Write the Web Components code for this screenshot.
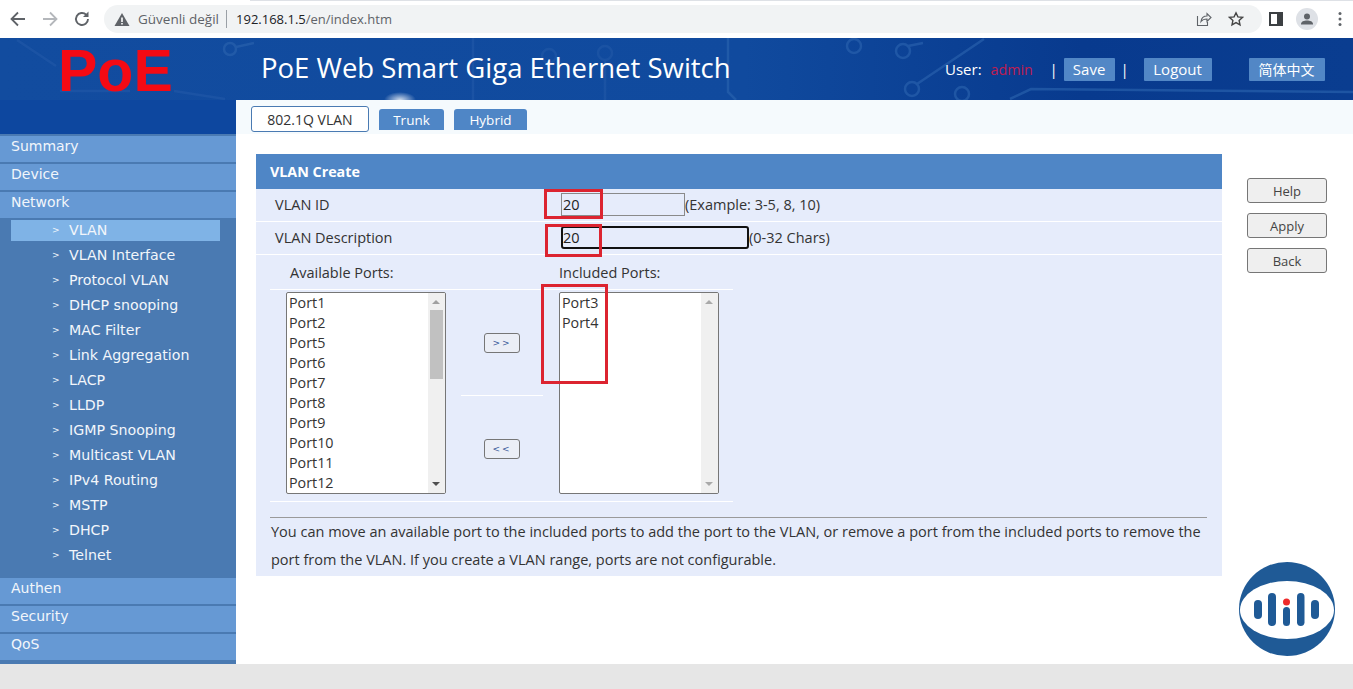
<!DOCTYPE html>
<html>
<head>
<meta charset="utf-8">
<title>VLAN</title>
<style>
    html, body { margin: 0; height: 100%; overflow: hidden; background: #fff; }
    body { display: flex; flex-direction: column; height: 689px; font-family: "Open Sans", "Liberation Sans", sans-serif; color: #222; }
    main-area { flex: 1; }
</style>
</head>
<body>
<browser-bar></browser-bar>
<switch-header></switch-header>
<main-area>
    <side-menu>
        <menu-head>Summary</menu-head>
        <menu-head>Device</menu-head>
        <menu-head>Network</menu-head>
        <menu-list>
            <menu-sub active>VLAN</menu-sub>
            <menu-sub>VLAN Interface</menu-sub>
            <menu-sub>Protocol VLAN</menu-sub>
            <menu-sub>DHCP snooping</menu-sub>
            <menu-sub>MAC Filter</menu-sub>
            <menu-sub>Link Aggregation</menu-sub>
            <menu-sub>LACP</menu-sub>
            <menu-sub>LLDP</menu-sub>
            <menu-sub>IGMP Snooping</menu-sub>
            <menu-sub>Multicast VLAN</menu-sub>
            <menu-sub>IPv4 Routing</menu-sub>
            <menu-sub>MSTP</menu-sub>
            <menu-sub>DHCP</menu-sub>
            <menu-sub>Telnet</menu-sub>
        </menu-list>
        <menu-head>Authen</menu-head>
        <menu-head>Security</menu-head>
        <menu-head>QoS</menu-head>
    </side-menu>
    <tab-strip>
        <tab-btn active style="width:118px">802.1Q VLAN</tab-btn>
        <tab-btn style="width:65px">Trunk</tab-btn>
        <tab-btn style="width:73px">Hybrid</tab-btn>
    </tab-strip>
    <vlan-panel></vlan-panel>
    <action-column></action-column>
</main-area>
<div style="height:25px;background:#e6e6e6;flex:none"></div>

<script>
class BrowserBar extends HTMLElement{
    constructor(){
        super();
        this.shadow = this.attachShadow({mode: "open"});
    }

    connectedCallback(){
        this.shadow.innerHTML = `
            <style>
                :host { display: block; flex: none; height: 38px; background: #fff; position: relative; font-family: "Open Sans", sans-serif; }
                #top { position: absolute; left: 250px; right: 0; top: 0; height: 1px; background: #dee1e6; }
                #bar { display: flex; align-items: center; height: 38px; padding: 0 0 0 8px; box-sizing: border-box; }
                svg { display: block; flex: none; }
                .nav { width: 20px; height: 20px; margin-right: 12px; }
                #pill { display: flex; align-items: center; width: 1158px; height: 28px; margin-left: 12px; border-radius: 14px; background: #f1f3f4; }
                #warn { margin-left: 10px; }
                #state { font-size: 13.5px; color: #5f6368; margin-left: 8px; white-space: nowrap; }
                #sep { width: 1px; height: 18px; background: #9aa0a6; margin: 0 9px 0 7px; }
                #host { font-size: 13px; color: #202124; }
                #path { font-size: 13px; color: #5f6368; }
                #share { margin-left: auto; }
                #star { margin: 0 18px 0 16px; }
                #panel { margin-left: 7px; }
                #user { margin-left: 13px; }
                #more { margin-left: 20px; }
            </style>
            <div id="top"></div>
            <div id="bar">
                <svg class="nav" viewBox="0 0 20 20" fill="none" stroke="#5f6368" stroke-width="1.8"><path d="M17 10H4M10 3.5L3.5 10l6.500 6.500"/></svg>
                <svg class="nav" viewBox="0 0 20 20" fill="none" stroke="#b4b7bb" stroke-width="1.8"><path d="M3 10h13M10 3.500L16.500 10 10 16.500"/></svg>
                <svg class="nav" style="margin-right:0" viewBox="0 0 20 20" fill="none" stroke="#5f6368" stroke-width="1.9"><path d="M16 10a6 6 0 1 1-1.800-4.300"/><path d="M16.500 2.500v5.500H11z" fill="#5f6368" stroke="none"/></svg>
                <div id="pill">
                    <svg id="warn" width="16" height="15" viewBox="0 0 16 15"><path d="M8 1L15.500 14H.5z" fill="#5f6368"/><path d="M7.200 5.500h1.600v4.500H7.200zM7.200 11h1.600v1.500H7.200z" fill="#fff"/></svg>
                    <span id="state">Güvenli değil</span>
                    <span id="sep"></span>
                    <span id="host">192.168.1.5</span><span id="path">/en/index.htm</span>
                    <svg id="share" width="16" height="16" viewBox="0 0 16 16" fill="none" stroke="#5f6368" stroke-width="1.100"><path d="M1.500 5v9.500h10V11"/><path d="M5 10.500C5.500 6.500 8 5 11 5V2.500L15 6.500 11 10.500V8C8.500 8 6.500 8.500 5 10.500z"/></svg>
                    <svg id="star" width="16" height="16" viewBox="0 0 16 16" fill="none" stroke="#444" stroke-width="1.400"><path d="M8 1.800l1.900 4.100 4.500.5-3.300 3 .9 4.400L8 11.600l-4 2.200.9-4.400-3.300-3 4.500-.5z"/></svg>
                </div>
                <svg id="panel" width="14" height="14" viewBox="0 0 14 14"><path d="M0 0h14v14H0z" fill="#3c4043"/><path d="M2 2h6v10H2z" fill="#fff"/></svg>
                <svg id="user" width="22" height="22" viewBox="0 0 22 22"><circle cx="11" cy="11" r="11" fill="#dee1e6"/><circle cx="11" cy="8.500" r="3" fill="#5f6368"/><path d="M5 16c0-2.500 3-3.500 6-3.500s6 1 6 3.500v.500H5z" fill="#5f6368"/></svg>
                <svg id="more" width="4" height="16" viewBox="0 0 4 16" fill="#5f6368"><circle cx="2" cy="2.500" r="1.500"/><circle cx="2" cy="8" r="1.500"/><circle cx="2" cy="13.500" r="1.500"/></svg>
            </div>
        `;
    }
}
customElements.define("browser-bar", BrowserBar);

class SwitchHeader extends HTMLElement{
    constructor(){
        super();
        this.shadow = this.attachShadow({mode: "open"});
    }

    connectedCallback(){
        this.shadow.innerHTML = `
            <style>
                :host { display: block; flex: none; height: 62px; position: relative; background: linear-gradient(90deg, #124c9f 0%, #104a9e 55%, #083a8e 80%, #0a3d90 100%); font-family: "Open Sans", "Noto Sans CJK SC", sans-serif; color: #fff; }
                #traces { position: absolute; left: 0; top: 0; }
                #row { position: relative; display: flex; align-items: center; height: 62px; }
                #logo { width: 261px; box-sizing: border-box; padding-left: 58px; font: bold 59px/58px "Liberation Sans", sans-serif; color: #f40a14; margin-top: 3px; }
                #title { font-size: 27.500px; margin-top: -3px; width: 684px; white-space: nowrap; }
                #tools { display: flex; align-items: center; font-size: 15px; }
                #who { color: #c01c50; margin-left: 9px; width: 42px; font-size: 14.300px; }
                .bar { width: 10px; text-align: center; }
                .act { display: flex; align-items: center; justify-content: center; height: 23px; background: #5287c6; border-radius: 1px; }
            </style>
            <svg id="traces" width="1353" height="62" fill="none" stroke-width="2.500">
                <defs>
                    <radialGradient id="glow"><stop offset="0" stop-color="#fff" stop-opacity=".8"/><stop offset="1" stop-color="#fff" stop-opacity="0"/></radialGradient>
                </defs>
                <g stroke="#2a60ac" opacity=".4">
                    <path d="M17 2l39 26M60 53h70M174 53l51 8"/>
                    <circle cx="549" cy="18" r="7"/><circle cx="605" cy="15" r="7"/>
                    <path d="M473 0v62M605 22v40"/>
                </g>
                <g stroke="#2a62ae" opacity=".65">
                    <circle cx="230" cy="11" r="6"/><path d="M236 9l18-4"/>
                    <circle cx="854" cy="8" r="7"/>
                    <circle cx="903" cy="13" r="7"/><path d="M908 8l15-3"/>
                    <circle cx="912" cy="51" r="7"/><path d="M917 46l67-45"/>
                    <circle cx="962" cy="56" r="7"/>
                    <path d="M728 0v54l8 8M1010 61l21-10 322 3"/>
                </g>
                <ellipse cx="400" cy="62" rx="16" ry="8" fill="url(#glow)"/>
            </svg>
            <div id="row">
                <div id="logo">PoE</div>
                <div id="title">PoE Web Smart Giga Ethernet Switch</div>
                <div id="tools">
                    <span>User:</span><span id="who">admin</span>
                    <span class="bar" style="margin-left:16px">|</span>
                    <span class="act" style="width:51px;margin-left:5px">Save</span>
                    <span class="bar" style="margin-left:5px">|</span>
                    <span class="act" style="width:68px;margin-left:14px">Logout</span>
                    <span class="act" style="width:76px;margin-left:37px;font-size:14px">简体中文</span>
                </div>
            </div>
        `;
    }
}
customElements.define("switch-header", SwitchHeader);

class MainArea extends HTMLElement{
    constructor(){
        super();
        this.shadow = this.attachShadow({mode: "open"});
    }

    connectedCallback(){
        this.shadow.innerHTML = `
            <style>
                :host { display: grid; grid-template-columns: 236px 20px 966px 1fr; grid-template-rows: 34px 1fr; min-height: 0; }
                ::slotted(side-menu) { grid-column: 1; grid-row: 1 / 3; }
                ::slotted(tab-strip) { grid-column: 2 / 5; grid-row: 1; }
                ::slotted(vlan-panel) { grid-column: 3; grid-row: 2; }
                ::slotted(action-column) { grid-column: 4; grid-row: 2; }
            </style>
            <slot></slot>
        `;
    }
}
customElements.define("main-area", MainArea);

class SideMenu extends HTMLElement{
    constructor(){
        super();
        this.shadow = this.attachShadow({mode: "open"});
    }

    connectedCallback(){
        this.shadow.innerHTML = `
            <style>
                :host { display: block; background: #4a7ab2; font-family: "DejaVu Sans", Verdana, sans-serif; overflow: hidden; }
                #cap { height: 34px; background: #0d479f; }
            </style>
            <div id="cap"></div>
            <slot></slot>
        `;
    }
}
customElements.define("side-menu", SideMenu);

class MenuHead extends HTMLElement{
    constructor(){
        super();
        this.shadow = this.attachShadow({mode: "open"});
    }

    connectedCallback(){
        this.shadow.innerHTML = `
            <style>
                :host { display: block; box-sizing: border-box; height: 28px; padding-left: 11px; background: #6699d4; border-top: 2px solid #4a7ab2; color: #f2f6fb; font-size: 14px; line-height: 20px; }
            </style>
            <slot></slot>
        `;
    }
}
customElements.define("menu-head", MenuHead);

class MenuList extends HTMLElement{
    constructor(){
        super();
        this.shadow = this.attachShadow({mode: "open"});
    }

    connectedCallback(){
        this.shadow.innerHTML = `
            <style>
                :host { display: block; padding-bottom: 8px; }
            </style>
            <slot></slot>
        `;
    }
}
customElements.define("menu-list", MenuList);

class MenuSub extends HTMLElement{
    constructor(){
        super();
        this.shadow = this.attachShadow({mode: "open"});
    }

    connectedCallback(){
        this.shadow.innerHTML = `
            <style>
                :host { display: block; height: 25px; padding: 2px 16px 2px 11px; box-sizing: border-box; color: #f2f6fb; font-size: 14.200px; }
                #in { display: flex; align-items: center; height: 21px; box-sizing: border-box; padding-bottom: 2px; }
                :host([active]) #in { background: #7fb3e6; }
                i { font-style: normal; font-size: 9px; width: 58px; padding-left: 41px; box-sizing: border-box; flex: none; }
            </style>
            <div id="in"><i>&gt;</i><slot></slot></div>
        `;
    }
}
customElements.define("menu-sub", MenuSub);

class TabStrip extends HTMLElement{
    constructor(){
        super();
        this.shadow = this.attachShadow({mode: "open"});
    }

    connectedCallback(){
        this.shadow.innerHTML = `
            <style>
                :host { display: flex; align-items: flex-start; gap: 10px; padding: 6px 0 0 15px; box-sizing: border-box; height: 34px; background: #f5fafd; }
            </style>
            <slot></slot>
        `;
    }
}
customElements.define("tab-strip", TabStrip);

class TabBtn extends HTMLElement{
    constructor(){
        super();
        this.shadow = this.attachShadow({mode: "open"});
    }

    connectedCallback(){
        this.shadow.innerHTML = `
            <style>
                :host { display: block; box-sizing: border-box; margin-top: 3px; height: 21px; background: #4f86c6; color: #fff; border-radius: 3px 3px 0 0; font-size: 13.500px; line-height: 22px; text-align: center; font-family: "Open Sans", sans-serif; }
                :host([active]) { margin-top: 0; height: 26px; background: #fff; color: #333; border: 1px solid #4a7ab2; border-radius: 3px; font-size: 14px; line-height: 25px; }
            </style>
            <slot></slot>
        `;
    }
}
customElements.define("tab-btn", TabBtn);

class PortList extends HTMLElement{
    constructor(){
        super();
        this.shadow = this.attachShadow({mode: "open"});
    }

    connectedCallback(){
        const full = this.hasAttribute("scroll");
        this.shadow.innerHTML = `
            <style>
                :host { display: flex; width: 160px; height: 202px; box-sizing: border-box; background: #fff; border: 1px solid #767676; border-radius: 2px; overflow: hidden; }
                #items { flex: 1; padding: 0 0 0 2px; font-size: 14.300px; line-height: 20px; color: #333; }
                #track { position: relative; width: 17px; background: #f0f0f0; flex: none; }
                .up, .down { position: absolute; left: 4px; width: 0; height: 0; border-left: 4px solid transparent; border-right: 4px solid transparent; }
                .up { top: 7px; border-bottom: 4px solid ${full ? "#a0a0a0" : "#a9a9a9"}; }
                .down { bottom: 7px; border-top: 4px solid ${full ? "#505050" : "#a9a9a9"}; }
                #thumb { position: absolute; left: 2px; top: 17px; width: 13px; height: 69px; background: #c1c1c1; display: ${full ? "block" : "none"}; }
            </style>
            <div id="items"><slot></slot></div>
            <div id="track"><div class="up"></div><div id="thumb"></div><div class="down"></div></div>
        `;
    }
}
customElements.define("port-list", PortList);

class MoveBtn extends HTMLElement{
    constructor(){
        super();
        this.shadow = this.attachShadow({mode: "open"});
    }

    connectedCallback(){
        this.shadow.innerHTML = `
            <style>
                :host { display: flex; align-items: center; justify-content: center; width: 36px; height: 20px; box-sizing: border-box; background: #ebeef6; border: 1px solid #767676; border-radius: 3px; color: #3a5a9a; font: 9px "DejaVu Sans", sans-serif; letter-spacing: 2px; }
            </style>
            <slot></slot>
        `;
    }
}
customElements.define("move-btn", MoveBtn);

class MarkBox extends HTMLElement{
    constructor(){
        super();
        this.shadow = this.attachShadow({mode: "open"});
    }

    connectedCallback(){
        this.shadow.innerHTML = `
            <style>
                :host { position: absolute; box-sizing: border-box; border: 3px solid #dc2430; pointer-events: none; }
            </style>
        `;
    }
}
customElements.define("mark-box", MarkBox);

class VlanPanel extends HTMLElement{
    constructor(){
        super();
        this.shadow = this.attachShadow({mode: "open"});
    }

    connectedCallback(){
        this.shadow.innerHTML = `
            <style>
                :host { display: block; position: relative; margin-top: 20px; height: 422px; background: #e6ecfb; font-size: 14.500px; color: #333; font-family: "Open Sans", sans-serif; }
                #head { height: 35px; box-sizing: border-box; padding-left: 14px; background: #4f86c6; color: #fff; font-weight: 700; font-size: 14.300px; line-height: 35px; }
                .row { display: grid; grid-template-columns: 286px auto 1fr; align-items: center; height: 33px; box-sizing: border-box; padding-left: 19px; padding-bottom: 1px; border-bottom: 1px solid #fff; }
                .field { box-sizing: border-box; height: 23px; padding-left: 1px; border: 1px solid #8a8a8a; line-height: 22px; color: #222; }
                #ports { margin-left: 14px; width: 463px; display: grid; grid-template-columns: 289px 174px; }
                .cap { height: 34px; line-height: 36px; border-bottom: 1px solid #fff; }
                #body { display: grid; grid-template-columns: 16px 160px 15px 82px 16px 160px; padding: 2px 0 7px; grid-column: 1 / 3; border-bottom: 1px solid #fff; }
                #body port-list:first-child { grid-column: 2; }
                #moves { grid-column: 4; display: flex; flex-direction: column; align-items: center; }
                #moves move-btn:first-child { margin-top: 41px; }
                #line { width: 82px; height: 1px; background: #fff; margin: 42px 0 43px; }
                #note { margin: 15px 15px 0 14px; padding-left: 1px; border-top: 1px solid #9a9a9a; line-height: 28px; }
            </style>
            <div id="head">VLAN Create</div>
            <div class="row"><label>VLAN ID</label><div class="field" style="width:124px">20</div><span>(Example: 3-5, 8, 10)</span></div>
            <div class="row"><label>VLAN Description</label><div class="field" style="width:188px;border:2px solid #111;border-radius:3px;line-height:20px;padding-left:0">20</div><span>(0-32 Chars)</span></div>
            <div id="ports">
                <div class="cap" style="padding-left:20px">Available Ports:</div>
                <div class="cap">Included Ports:</div>
                <div id="body">
                    <port-list scroll>
                        <div>Port1</div><div>Port2</div><div>Port5</div><div>Port6</div><div>Port7</div>
                        <div>Port8</div><div>Port9</div><div>Port10</div><div>Port11</div><div>Port12</div>
                    </port-list>
                    <div id="moves">
                        <move-btn>&gt;&gt;</move-btn>
                        <div id="line"></div>
                        <move-btn>&lt;&lt;</move-btn>
                    </div>
                    <port-list style="grid-column:6">
                        <div>Port3</div><div>Port4</div>
                    </port-list>
                </div>
            </div>
            <div id="note">You can move an available port to the included ports to add the port to the VLAN, or remove a port from the included ports to remove the port from the VLAN. If you create a VLAN range, ports are not configurable.</div>
            <mark-box style="left:288px;top:35px;width:59px;height:30px"></mark-box>
            <mark-box style="left:289px;top:70px;width:57px;height:33px"></mark-box>
            <mark-box style="left:285px;top:130px;width:67px;height:100px"></mark-box>
        `;
    }
}
customElements.define("vlan-panel", VlanPanel);

class ActionColumn extends HTMLElement{
    constructor(){
        super();
        this.shadow = this.attachShadow({mode: "open"});
    }

    connectedCallback(){
        this.shadow.innerHTML = `
            <style>
                :host { display: flex; flex-direction: column; padding: 44px 0 0 25px; font-family: "Open Sans", sans-serif; }
                .btn { display: flex; align-items: center; justify-content: center; width: 80px; height: 25px; box-sizing: border-box; margin-bottom: 10px; background: #efefef; border: 1px solid #767676; border-radius: 3px; font-size: 13px; color: #444; }
                svg { display: block; margin: 279px 0 0 -8px; }
            </style>
            <div class="btn">Help</div>
            <div class="btn">Apply</div>
            <div class="btn">Back</div>
            <svg width="96" height="94" viewBox="0 0 96 94">
                <ellipse cx="48" cy="47" rx="48" ry="47" fill="#1f5a96"/>
                <ellipse cx="48" cy="48" rx="47" ry="29" fill="#fff"/>
                <rect x="15" y="38" width="8" height="19" rx="4" fill="#1f5a96"/>
                <rect x="29" y="31" width="8" height="33" rx="4" fill="#1f5a96"/>
                <rect x="44" y="45" width="7" height="19" rx="3.500" fill="#1f5a96"/>
                <circle cx="47.500" cy="40" r="3.500" fill="#ee2a2a"/>
                <rect x="58" y="31" width="7.500" height="33" rx="3.700" fill="#1f5a96"/>
                <rect x="72" y="38" width="8" height="19" rx="4" fill="#1f5a96"/>
            </svg>
        `;
    }
}
customElements.define("action-column", ActionColumn);
</script>
</body>
</html>
